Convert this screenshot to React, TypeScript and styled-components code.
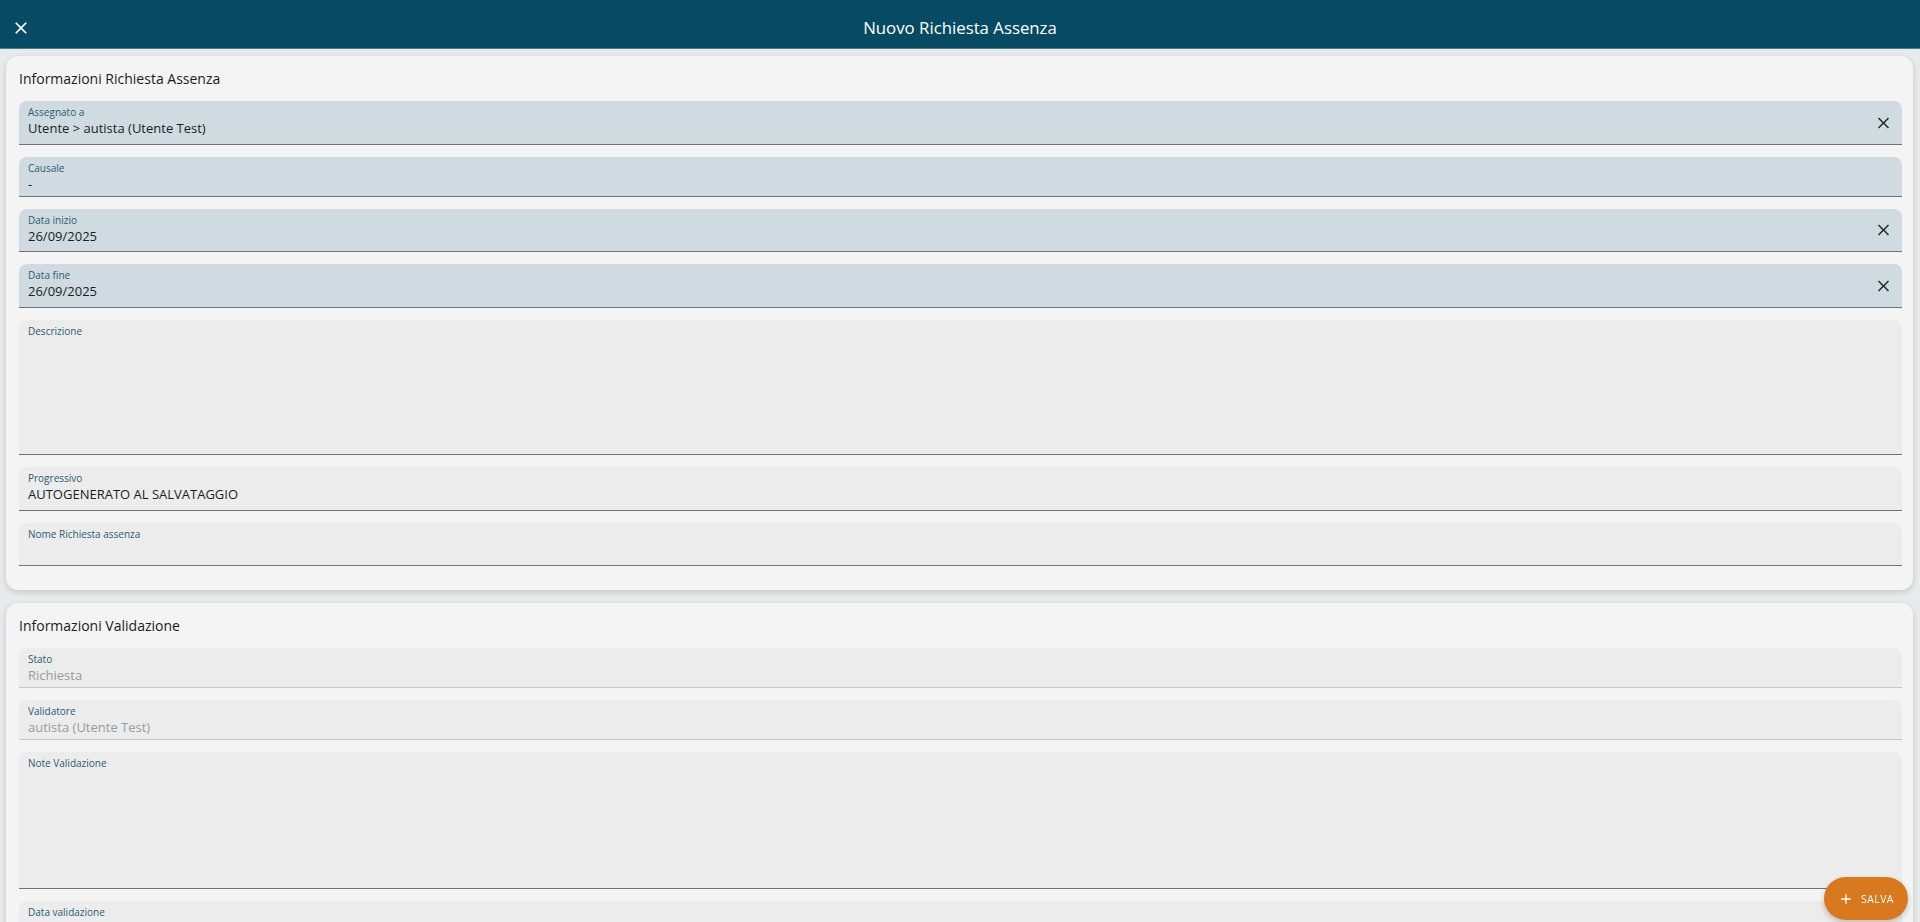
import React from "react";
import styled, { createGlobalStyle } from "styled-components";

const GlobalStyle = createGlobalStyle`
    html, body {
        margin: 0;
        padding: 0;
        background: #e7ebec;
        font-family: "Open Sans", "Noto Sans", sans-serif;
        overflow: hidden;
    }
    * { box-sizing: border-box; }
`;

const Page = styled.div`
    min-height: 100vh;
    display: flex;
    flex-direction: column;
`;

const TopBar = styled.header`
    height: 49px;
    padding-top: 7px;
    background: #074a63;
    color: #ffffff;
    display: flex;
    align-items: center;
    justify-content: center;
    position: relative;
    border-bottom: 1px solid #4a7a8c;
`;

const CloseButton = styled.button`
    position: absolute;
    left: 11px;
    top: 18px;
    background: none;
    border: none;
    padding: 0;
    color: #ffffff;
    display: flex;
    cursor: pointer;
`;

const TopTitle = styled.h1`
    margin: 0;
    font-size: 16.8px;
    font-weight: 400;
`;

const Content = styled.main`
    padding: 7px 7px 0 6px;
    display: flex;
    flex-direction: column;
    gap: 13px;
`;

const Card = styled.section`
    background: #f3f4f3;
    border-radius: 12px;
    box-shadow: 0 2px 6px rgba(0, 0, 0, 0.16);
    padding: 13px 11px 24px 13px;
    display: flex;
    flex-direction: column;
    gap: 12px;
`;

const CardTitle = styled.h2`
    margin: 0;
    font-size: 14px;
    font-weight: 400;
    color: #1c1c1c;
    line-height: 20px;
`;

type Tone = "blue" | "grey";

const FieldBox = styled.div<{ $tone: Tone; $height: number; $disabled?: boolean }>`
    position: relative;
    height: ${(p) => p.$height}px;
    flex-shrink: 0;
    background: ${(p) => (p.$tone === "blue" ? "#cfdbe0" : "#ebeceb")};
    border-radius: 8px 8px 0 0;
    border-bottom: 1.5px solid ${(p) => (p.$disabled ? "#c6c8c8" : "#707375")};
    padding: 5px 48px 0 9px;
`;

const FieldLabel = styled.div`
    font-size: 10px;
    line-height: 13px;
    color: #2c5b72;
`;

const FieldValue = styled.div<{ $muted?: boolean }>`
    font-size: 13px;
    line-height: 18px;
    color: ${(p) => (p.$muted ? "#9a9c9d" : "#1d1d1d")};
`;

const ClearButton = styled.button`
    position: absolute;
    right: 9px;
    top: 50%;
    transform: translateY(-50%);
    background: none;
    border: none;
    padding: 0;
    color: #2a2a2a;
    display: flex;
    cursor: pointer;
`;

const Fab = styled.button`
    position: fixed;
    right: 12px;
    bottom: 2px;
    width: 84px;
    height: 43px;
    border-radius: 22px;
    border: none;
    background: #d8791f;
    color: #ffffff;
    display: flex;
    align-items: center;
    justify-content: center;
    gap: 7px;
    font-family: "Open Sans", sans-serif;
    font-size: 10.5px;
    letter-spacing: 0.4px;
    box-shadow: 0 3px 6px rgba(0, 0, 0, 0.2);
    cursor: pointer;
`;

const CloseIcon = ({ size }: { size: number }) => (
    <svg width={size} height={size} viewBox="0 0 24 24" fill="currentColor">
        <path d="M19 6.41 17.59 5 12 10.59 6.41 5 5 6.41 10.59 12 5 17.59 6.41 19 12 13.41 17.59 19 19 17.59 13.41 12z" />
    </svg>
);

const PlusIcon = () => (
    <svg width="16" height="16" viewBox="0 0 24 24" fill="currentColor">
        <path d="M19 13h-6v6h-2v-6H5v-2h6V5h2v6h6v2z" />
    </svg>
);

interface IField {
    label: string;
    value?: string;
    tone: Tone;
    height: number;
    clearable?: boolean;
    muted?: boolean;
    disabled?: boolean;
}

function Field({ label, value, tone, height, clearable, muted, disabled }: IField) {
    return (
        <FieldBox $tone={tone} $height={height} $disabled={disabled}>
            <FieldLabel>{label}</FieldLabel>
            {value && <FieldValue $muted={muted}>{value}</FieldValue>}
            {clearable && (
                <ClearButton>
                    <CloseIcon size={19} />
                </ClearButton>
            )}
        </FieldBox>
    );
}

const richiesta: IField[] = [
    { label: "Assegnato a", value: "Utente > autista (Utente Test)", tone: "blue", height: 44, clearable: true },
    { label: "Causale", value: "-", tone: "blue", height: 40 },
    { label: "Data inizio", value: "26/09/2025", tone: "blue", height: 43, clearable: true },
    { label: "Data fine", value: "26/09/2025", tone: "blue", height: 44, clearable: true },
    { label: "Descrizione", tone: "grey", height: 135 },
    { label: "Progressivo", value: "AUTOGENERATO AL SALVATAGGIO", tone: "grey", height: 44 },
    { label: "Nome Richiesta assenza", tone: "grey", height: 43 },
];

const validazione: IField[] = [
    { label: "Stato", value: "Richiesta", tone: "grey", height: 40, muted: true, disabled: true },
    { label: "Validatore", value: "autista (Utente Test)", tone: "grey", height: 40, muted: true, disabled: true },
    { label: "Note Validazione", tone: "grey", height: 137 },
    { label: "Data validazione", tone: "grey", height: 44 },
];

export default function App() {
    return (
        <>
            <GlobalStyle />
            <Page>
                <TopBar>
                    <CloseButton>
                        <CloseIcon size={20} />
                    </CloseButton>
                    <TopTitle>Nuovo Richiesta Assenza</TopTitle>
                </TopBar>

                <Content>
                    <Card>
                        <CardTitle>Informazioni Richiesta Assenza</CardTitle>
                        {richiesta.map((f) => (
                            <Field key={f.label} {...f} />
                        ))}
                    </Card>

                    <Card>
                        <CardTitle>Informazioni Validazione</CardTitle>
                        {validazione.map((f) => (
                            <Field key={f.label} {...f} />
                        ))}
                    </Card>
                </Content>

                <Fab>
                    <PlusIcon />
                    SALVA
                </Fab>
            </Page>
        </>
    );
}
